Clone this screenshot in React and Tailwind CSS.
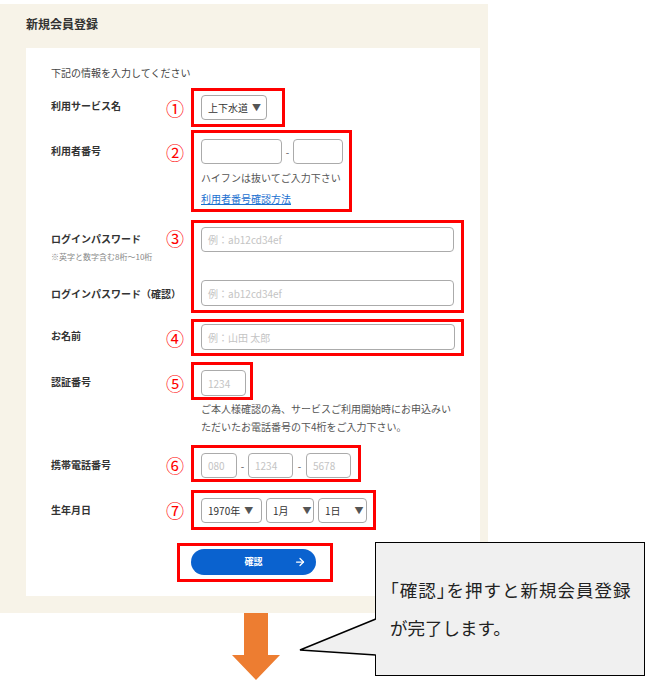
import React from "react";
import { ArrowRight } from "lucide-react";

const FONT = { fontFamily: '"Noto Sans CJK JP", "Noto Sans", sans-serif' };

function Label({ children, pt }) {
  return (
    <div className={`w-[110px] shrink-0 text-[10px] leading-[16px] font-bold text-[#333] ${pt}`}>{children}</div>
  );
}

function Num({ children, pt }) {
  return (
    <div className={`w-[30px] shrink-0 pl-[5px] text-[18px] leading-[20px] text-[#ff0000] ${pt}`}>{children}</div>
  );
}

function Input({ w, h = "h-[25px]", ph }) {
  return (
    <div className={`${w} ${h} border-[1.5px] border-[#ababab] rounded-[4px] bg-white flex items-center pl-[6px] text-[10px] text-[#c4c4c4] whitespace-nowrap`}>
      {ph}
    </div>
  );
}

function Select({ w, text, gap }) {
  return (
    <div className={`${w} h-[25px] border-[1.5px] border-[#a8a8a8] rounded-[4px] bg-white flex items-center pl-[6px] text-[10px] text-[#333] whitespace-nowrap`}>
      <span>{text}</span>
      <span className={`${gap} text-[9px] text-[#555]`}>▼</span>
    </div>
  );
}

export default function App() {
  return (
    <div className="w-[650px] h-[682px] bg-white relative overflow-hidden" style={FONT}>
      <div className="pt-[4px]">
        <div className="w-[488px] h-[609px] bg-[#f7f3e8] pl-[26px]">
          <div className="pt-[12px] h-[44px] text-[12px] leading-[16px] font-bold text-[#333]">新規会員登録</div>
          <div className="w-[454px] h-[548px] bg-white pl-[25px] pt-[17px]">
            <div className="text-[10px] leading-[16px] text-[#444]">下記の情報を入力してください</div>

            {/* Row 1 */}
            <div className="flex items-start mt-[7px]">
              <Label pt="pt-[10px]">利用サービス名</Label>
              <Num pt="pt-[10px]">①</Num>
              <div className="w-[94px] h-[39px] border-[3px] border-[#ff0000] pl-[7px] pt-[4px]">
                <Select w="w-[66px]" text="上下水道" gap="ml-[4px]" />
              </div>
            </div>

            {/* Row 2 */}
            <div className="flex items-start mt-[3px]">
              <Label pt="pt-[13px]">利用者番号</Label>
              <Num pt="pt-[12px]">②</Num>
              <div className="w-[161px] h-[82px] border-[3px] border-[#ff0000] pl-[7px] pt-[6px]">
                <div className="flex items-center">
                  <Input w="w-[81px]" />
                  <span className="w-[11px] text-center text-[10px] text-[#555]">-</span>
                  <Input w="w-[50px]" />
                </div>
                <div className="mt-[6px] text-[10px] leading-[16px] text-[#555]">ハイフンは抜いてご入力下さい</div>
                <div className="mt-[5px] text-[10px] leading-[16px] text-[#1a6fd0] underline">利用者番号確認方法</div>
              </div>
            </div>

            {/* Row 3 */}
            <div className="flex items-start mt-[8px]">
              <div className="w-[110px] shrink-0 pt-[11px]">
                <div className="text-[10px] leading-[16px] font-bold text-[#333]">ログインパスワード</div>
                <div className="mt-[4px] text-[8px] leading-[12px] text-[#888] whitespace-nowrap">※英字と数字含む8桁〜10桁</div>
                <div className="mt-[23px] text-[10px] leading-[16px] font-bold text-[#333] whitespace-nowrap">ログインパスワード（確認）</div>
              </div>
              <Num pt="pt-[8px]">③</Num>
              <div className="w-[273px] h-[93px] border-[3px] border-[#ff0000] pl-[7px] pt-[4px]">
                <Input w="w-[253px]" ph="例：ab12cd34ef" />
                <div className="mt-[28px]">
                  <Input w="w-[253px]" h="h-[26px]" ph="例：ab12cd34ef" />
                </div>
              </div>
            </div>

            {/* Row 4 */}
            <div className="flex items-start mt-[6px]">
              <Label pt="pt-[9px]">お名前</Label>
              <Num pt="pt-[9px]">④</Num>
              <div className="w-[273px] h-[37px] border-[3px] border-[#ff0000] pl-[7px] pt-[2px]">
                <Input w="w-[254px]" h="h-[26px]" ph="例：山田 太郎" />
              </div>
            </div>

            {/* Row 5 */}
            <div className="flex items-start mt-[6px]">
              <Label pt="pt-[12px]">認証番号</Label>
              <Num pt="pt-[11px]">⑤</Num>
              <div className="w-[62px] h-[38px] border-[3px] border-[#ff0000] pl-[7px] pt-[5px]">
                <Input w="w-[45px]" h="h-[26px]" ph="1234" />
              </div>
            </div>
            <div className="pl-[150px] text-[10px] leading-[18px] text-[#555]">
              <div>ご本人様確認の為、サービスご利用開始時にお申込みい</div>
              <div>ただいたお電話番号の下4桁をご入力下さい。</div>
            </div>

            {/* Row 6 */}
            <div className="flex items-start mt-[9px]">
              <Label pt="pt-[12px]">携帯電話番号</Label>
              <Num pt="pt-[10px]">⑥</Num>
              <div className="w-[170px] h-[37px] border-[3px] border-[#ff0000] pl-[7px] pt-[5px]">
                <div className="flex items-center">
                  <Input w="w-[36px]" ph="080" />
                  <span className="w-[11px] text-center text-[10px] text-[#555]">-</span>
                  <Input w="w-[45px]" ph="1234" />
                  <span className="w-[13px] text-center text-[10px] text-[#555]">-</span>
                  <Input w="w-[45px]" ph="5678" />
                </div>
              </div>
            </div>

            {/* Row 7 */}
            <div className="flex items-start mt-[8px]">
              <Label pt="pt-[12px]">生年月日</Label>
              <Num pt="pt-[10px]">⑦</Num>
              <div className="w-[185px] h-[40px] border-[3px] border-[#ff0000] pl-[7px] pt-[5px]">
                <div className="flex items-center gap-[4px]">
                  <Select w="w-[61px]" text="1970年" gap="ml-[4px]" />
                  <Select w="w-[48px]" text="1月" gap="ml-[14px]" />
                  <Select w="w-[49px]" text="1日" gap="ml-[14px]" />
                </div>
              </div>
            </div>

            {/* Button */}
            <div className="mt-[13px] ml-[126px] w-[156px] h-[39px] border-[3px] border-[#ff0000] pl-[11px] pt-[3px]">
              <div className="w-[125px] h-[26px] rounded-full bg-[#0a62cf] relative flex items-center justify-center">
                <span className="text-[9px] font-bold text-white">確認</span>
                <ArrowRight className="absolute right-[10px] top-[7px] text-white" size={12} strokeWidth={2.5} />
              </div>
            </div>
          </div>
        </div>
      </div>

      {/* Orange arrow */}
      <svg className="absolute left-[230px] top-[613px]" width="52" height="69" viewBox="0 0 52 69">
        <polygon points="14,0 38,0 38,42 50,42 26,67 2,42 14,42" fill="#ed7d31" />
      </svg>

      {/* Callout */}
      <div className="absolute left-[375px] top-[542px] w-[270px] h-[134px] bg-[#f0f0f0] border-[1.5px] border-black flex flex-col justify-center pl-[14px] text-[17.5px] leading-[38px] text-[#222]">
        <div className="whitespace-nowrap tracking-[1px]">
          <span className="[font-feature-settings:'halt']">「</span>確認<span className="[font-feature-settings:'halt']">」</span>を押すと新規会員登録
        </div>
        <div>が完了します。</div>
      </div>
      <svg className="absolute left-[298px] top-[614px]" width="82" height="46" viewBox="0 0 82 46">
        <polygon points="77.5,5 2,36 77.5,41 80,41 80,5" fill="#f0f0f0" />
        <polyline points="77.8,5 2,36 77.8,41" fill="none" stroke="black" strokeWidth="1.5" />
      </svg>
    </div>
  );
}
